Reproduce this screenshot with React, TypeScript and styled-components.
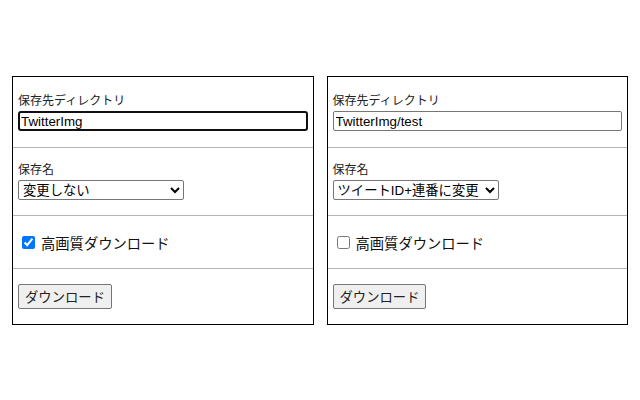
import React from "react";
import styled, { createGlobalStyle } from "styled-components";

const GlobalStyle = createGlobalStyle`
  body {
    margin: 0;
    background: #ffffff;
    font-family: "Liberation Sans", "Noto Sans CJK JP", sans-serif;
    color: #000;
  }
`;

type PanelData = {
  dir: string;
  focused: boolean;
  naming: string;
  hq: boolean;
};

const panels: PanelData[] = [
  { dir: "TwitterImg", focused: true, naming: "none", hq: true },
  { dir: "TwitterImg/test", focused: false, naming: "serial", hq: false },
];

const SettingsPanel = ({ data }: { data: PanelData }) => {
  return (
    <Panel>
      <Section $top={15} $bottom={16}>
        <FieldLabel>保存先ディレクトリ</FieldLabel>
        <DirInput type="text" defaultValue={data.dir} $focused={data.focused} />
      </Section>
      <Section $top={13} $bottom={15}>
        <FieldLabel>保存名</FieldLabel>
        <NameSelect defaultValue={data.naming}>
          <option value="none">変更しない</option>
          <option value="serial">ツイートID+連番に変更</option>
        </NameSelect>
      </Section>
      <Section>
        <CheckRow>
          <input type="checkbox" defaultChecked={data.hq} />
          <span>高画質ダウンロード</span>
        </CheckRow>
      </Section>
      <Section>
        <DownloadButton>ダウンロード</DownloadButton>
      </Section>
    </Panel>
  );
};

const App = () => {
  return (
    <>
      <GlobalStyle />
      <Page>
        {panels.map((p, i) => (
          <SettingsPanel key={i} data={p} />
        ))}
      </Page>
    </>
  );
};

const Page = styled.div`
  display: flex;
  gap: 13px;
  padding: 76px 12px 0;
`;

const Panel = styled.div`
  box-sizing: border-box;
  width: 302px;
  border: 1px solid #000;
  display: flex;
  flex-direction: column;
`;

const Section = styled.div<{ $top?: number; $bottom?: number }>`
  padding: ${(p) => p.$top ?? 15}px 5px ${(p) => p.$bottom ?? 15}px;
  border-bottom: 1px solid #b4b4b4;

  &:last-child {
    border-bottom: none;
  }
`;

const FieldLabel = styled.label`
  display: block;
  font-size: 12px;
  line-height: 19px;
  color: #222;
`;

const DirInput = styled.input<{ $focused: boolean }>`
  box-sizing: border-box;
  display: block;
  width: 100%;
  height: 20px;
  margin: 0;
  font-family: "Liberation Sans", "Noto Sans CJK JP", sans-serif;
  font-size: 13.33px;
  color: #000;
  border: ${(p) => (p.$focused ? "2px solid #101010" : "1px solid #767676")};
  border-radius: ${(p) => (p.$focused ? "3px" : "2px")};
  outline: none;
  padding: 1px 2px 1px ${(p) => (p.$focused ? "1px" : "2px")};
`;

const NameSelect = styled.select`
  box-sizing: border-box;
  display: block;
  width: 166px;
  height: 20px;
  margin: 0;
  font-family: "Liberation Sans", "Noto Sans CJK JP", sans-serif;
  font-size: 13.33px;
  color: #000;
  background: #fff;
  border: 1px solid #767676;
  border-radius: 2px;
`;

const CheckRow = styled.label`
  display: flex;
  align-items: center;
  height: 22px;
  font-size: 14.3px;
  color: #111;

  & input {
    width: 13px;
    height: 13px;
    margin: 0 6px 0 4px;
    accent-color: #0075ff;
  }
`;

const DownloadButton = styled.button`
  box-sizing: border-box;
  height: 25px;
  padding: 1px 6px;
  font-family: "Liberation Sans", "Noto Sans CJK JP", sans-serif;
  font-size: 13.33px;
  color: #222;
  background: #efefef;
  border: 1px solid #767676;
  border-radius: 2px;
`;

export default App;
